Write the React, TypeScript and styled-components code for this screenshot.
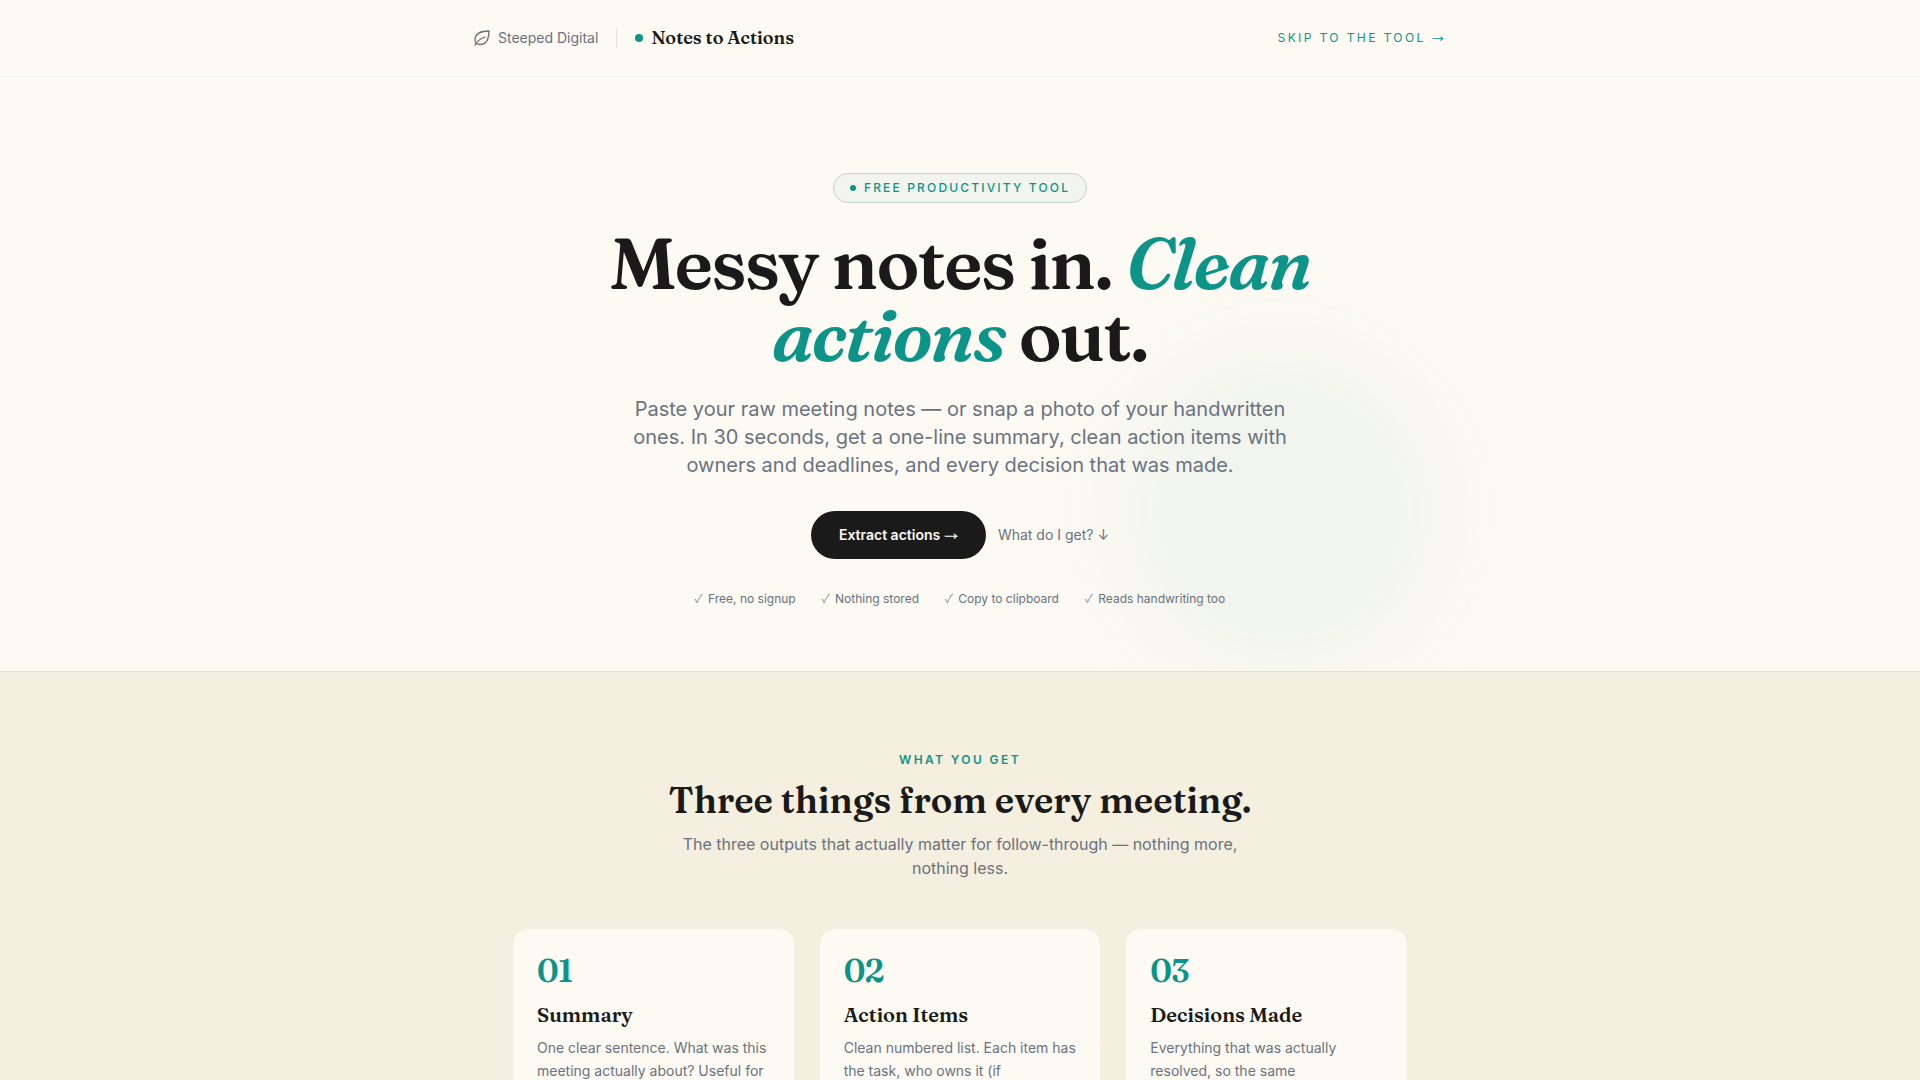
import React from "react";
import styled, { createGlobalStyle } from "styled-components";

const color = {
  cream: "#fdfaf3",
  sand: "#f5efdf",
  ink: "#1a1a1a",
  muted: "#6b7280",
  teal: "#0d9488",
  line: "#e5e1d3",
};
const sans = `Inter, "Liberation Sans", sans-serif`;
const serif = `Fraunces, "Liberation Serif", serif`;

const GlobalStyle = createGlobalStyle`
  * { box-sizing: border-box; }
  body { margin: 0; background: ${color.cream}; color: ${color.ink}; font-family: ${sans}; font-size: 16px; line-height: 24px; }
  h1, h2, h3, p, ul { margin: 0; padding: 0; }
  a { text-decoration: none; color: inherit; }
`;

const Header = styled.header`
  border-bottom: 1px solid #f2eee3;
`;
const HeaderInner = styled.div`
  max-width: 1020px;
  margin: 0 auto;
  padding: 24px;
  display: flex;
  align-items: center;
  justify-content: space-between;
`;
const Brand = styled.div`
  display: flex;
  align-items: center;
  gap: 18px;
  height: 28px;
`;
const Studio = styled.a`
  display: flex;
  align-items: center;
  gap: 8px;
  font-size: 14px;
  color: ${color.muted};
`;
const Divider = styled.span`
  width: 1px;
  height: 20px;
  background: ${color.line};
`;
const Product = styled.span`
  display: flex;
  align-items: center;
  gap: 8px;
  font-family: ${serif};
  font-size: 18px;
  font-weight: 600;
`;
const Dot = styled.span<{ $size: number }>`
  width: ${(p) => p.$size}px;
  height: ${(p) => p.$size}px;
  border-radius: 50%;
  background: ${color.teal};
`;
const Arrow = styled.span`
  font-family: "Noto Sans Math", "Noto Sans CJK JP", sans-serif;
  line-height: 1;
`;
const Check = styled.span`
  margin-right: 2px;
  font-family: "Noto Sans CJK JP", sans-serif;
  font-weight: 300;
  line-height: 1;
`;
const SkipLink = styled.a`
  font-size: 12px;
  letter-spacing: 0.2em;
  text-transform: uppercase;
  color: ${color.teal};
`;

const Hero = styled.section`
  position: relative;
  overflow: hidden;
  padding: 96px 24px 60px;
  border-bottom: 1px solid #e2dfd6;
  display: flex;
  flex-direction: column;
  align-items: center;
  text-align: center;
`;
const Glow = styled.div`
  position: absolute;
  left: 50%;
  bottom: -16px;
  width: 352px;
  height: 352px;
  margin-left: 144px;
  border-radius: 50%;
  background: rgba(13, 148, 136, 0.05);
  filter: blur(50px);
`;
const Badge = styled.span`
  position: relative;
  display: flex;
  align-items: center;
  gap: 8px;
  height: 30px;
  padding: 0 16px;
  border: 1px solid #c3d0c9;
  border-radius: 15px;
  background: #f2f5ee;
  color: ${color.teal};
  font-size: 12px;
  font-weight: 500;
  letter-spacing: 0.18em;
  text-transform: uppercase;
`;
const Title = styled.h1`
  position: relative;
  max-width: 780px;
  margin-top: 24px;
  font-family: ${serif};
  font-size: 72px;
  line-height: 72px;
  font-weight: 600;
  letter-spacing: -0.025em;
  em { color: ${color.teal}; }
`;
const Lead = styled.p`
  position: relative;
  max-width: 680px;
  margin-top: 24px;
  font-size: 20px;
  line-height: 28px;
  color: ${color.muted};
`;
const Actions = styled.div`
  position: relative;
  display: flex;
  align-items: center;
  gap: 12px;
  margin-top: 32px;
  font-size: 14px;
  color: ${color.muted};
`;
const PrimaryButton = styled.button`
  height: 48px;
  padding: 0 28px;
  border: 0;
  border-radius: 24px;
  background: ${color.ink};
  color: ${color.cream};
  font: 600 14px/20px ${sans};
`;
const Perks = styled.ul`
  position: relative;
  display: flex;
  gap: 26px;
  margin-top: 28px;
  list-style: none;
  font-size: 12px;
  color: ${color.muted};
`;

const Outputs = styled.section`
  background: ${color.sand};
  padding: 76px 24px 80px;
`;
const Intro = styled.div`
  display: flex;
  flex-direction: column;
  align-items: center;
  text-align: center;
`;
const Eyebrow = styled.p`
  color: ${color.teal};
  font-size: 12px;
  font-weight: 600;
  letter-spacing: 0.2em;
  text-transform: uppercase;
`;
const Heading = styled.h2`
  margin-top: 4px;
  font-family: ${serif};
  font-size: 36px;
  line-height: 48px;
  font-weight: 600;
`;
const Sub = styled.p`
  max-width: 560px;
  margin-top: 8px;
  color: ${color.muted};
`;
const Cards = styled.div`
  max-width: 896px;
  margin: 48px auto 0;
  display: grid;
  grid-template-columns: repeat(3, 1fr);
  gap: 24px;
`;
const Card = styled.article`
  padding: 24px;
  border: 1px solid #f2eee0;
  border-radius: 16px;
  background: ${color.cream};
`;
const Num = styled.div`
  font-family: ${serif};
  font-size: 32px;
  line-height: 36px;
  font-weight: 600;
  letter-spacing: -0.025em;
  color: ${color.teal};
`;
const CardTitle = styled.h3`
  margin-top: 13px;
  font-family: ${serif};
  font-size: 20px;
  line-height: 26px;
  font-weight: 600;
`;
const CardText = styled.p`
  margin-top: 8px;
  font-size: 14px;
  line-height: 23px;
  color: ${color.muted};
`;

const perks = ["Free, no signup", "Nothing stored", "Copy to clipboard", "Reads handwriting too"];
const outputs = [
  { title: "Summary", text: "One clear sentence. What was this meeting actually about? Useful for" },
  { title: "Action Items", text: "Clean numbered list. Each item has the task, who owns it (if" },
  { title: "Decisions Made", text: "Everything that was actually resolved, so the same" },
];

function Leaf() {
  return (
    <svg width="16" height="16" viewBox="0 0 16 16" fill="none" stroke="currentColor" strokeWidth="1.3" strokeLinecap="round" strokeLinejoin="round" aria-hidden="true">
      <path d="M15 1C8 1 1 3 1 10c0 3 2 4.500 5 4.500C13 14.500 15 8 15 1Z" />
      <path d="M1 15c2-4 6-6.500 10-8" />
    </svg>
  );
}

export default function App() {
  return (
    <>
      <GlobalStyle />
      <Header>
        <HeaderInner>
          <Brand>
            <Studio href="#home"><Leaf />Steeped Digital</Studio>
            <Divider />
            <Product><Dot $size={8} />Notes to Actions</Product>
          </Brand>
          <SkipLink href="#tool">Skip to the tool <Arrow>→</Arrow></SkipLink>
        </HeaderInner>
      </Header>
      <main>
        <Hero>
          <Glow />
          <Badge><Dot $size={6} />Free productivity tool</Badge>
          <Title>Messy notes in. <em>Clean actions</em> out.</Title>
          <Lead>
            Paste your raw meeting notes — or snap a photo of your handwritten ones. In 30 seconds, get a
            one-line summary, clean action items with owners and deadlines, and every decision that was made.
          </Lead>
          <Actions>
            <PrimaryButton type="button">Extract actions <Arrow>→</Arrow></PrimaryButton>
            <a href="#outputs">What do I get? ↓</a>
          </Actions>
          <Perks>{perks.map((p) => <li key={p}><Check>✓</Check> {p}</li>)}</Perks>
        </Hero>
        <Outputs id="outputs">
          <Intro>
            <Eyebrow>What you get</Eyebrow>
            <Heading>Three things from every meeting.</Heading>
            <Sub>The three outputs that actually matter for follow-through — nothing more, nothing less.</Sub>
          </Intro>
          <Cards>
            {outputs.map((o, i) => (
              <Card key={o.title}>
                <Num>0{i + 1}</Num>
                <CardTitle>{o.title}</CardTitle>
                <CardText>{o.text}</CardText>
              </Card>
            ))}
          </Cards>
        </Outputs>
      </main>
    </>
  );
}
